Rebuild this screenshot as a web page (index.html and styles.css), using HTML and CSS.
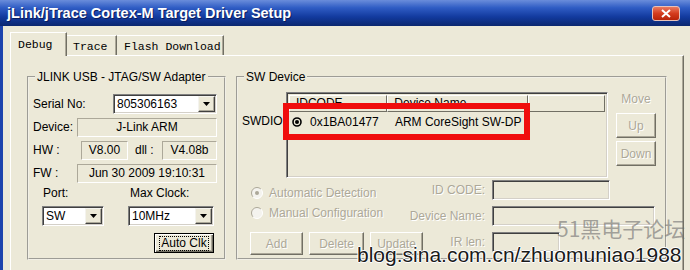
FILE: index.html
```html
<!DOCTYPE html>
<html lang="en">
<head>
    <meta charset="UTF-8">
    <meta name="viewport" content="width=device-width, initial-scale=1.0">
    <title>jLink/jTrace Cortex-M Target Driver Setup</title>
    <link rel="stylesheet" href="styles.css">
</head>
<body>
    <div class="window">
        <div class="titlebar">
            <span class="title">jLink/jTrace Cortex-M Target Driver Setup</span>
            <span class="close">
                <svg width="10" height="9" viewBox="0 0 10 9"><path d="M1 1L9 8M9 1L1 8" stroke="#fff" stroke-width="2" fill="none"/></svg>
            </span>
        </div>
        <div class="client">
            <div class="tabs">
                <div class="tab active">Debug</div>
                <div class="tab trace">Trace</div>
                <div class="tab flash">Flash Download</div>
            </div>
            <div class="panel">
                <fieldset class="group adapter">
                    <legend>JLINK USB - JTAG/SW Adapter</legend>
                    <div class="row">
                        <span class="lbl">Serial No:</span>
                        <div class="combo serial">
                            <span class="val">805306163</span>
                            <span class="drop"><svg width="7" height="4" viewBox="0 0 7 4"><path d="M0 0H7L3.5 4Z"/></svg></span>
                        </div>
                    </div>
                    <div class="row">
                        <span class="lbl">Device:</span>
                        <div class="static wide">J-Link ARM</div>
                    </div>
                    <div class="row">
                        <span class="lbl hw-lbl">HW :</span>
                        <div class="static hw">V8.00</div>
                        <span class="lbl dll-lbl">dll :</span>
                        <div class="static dll">V4.08b</div>
                    </div>
                    <div class="row">
                        <span class="lbl">FW :</span>
                        <div class="static wide">Jun 30 2009 19:10:31</div>
                    </div>
                    <div class="clocks">
                        <div class="field port">
                            <span class="lbl">Port:</span>
                            <div class="combo">
                                <span class="val">SW</span>
                                <span class="drop"><svg width="7" height="4" viewBox="0 0 7 4"><path d="M0 0H7L3.5 4Z"/></svg></span>
                            </div>
                        </div>
                        <div class="field clock">
                            <span class="lbl">Max Clock:</span>
                            <div class="combo">
                                <span class="val">10MHz</span>
                                <span class="drop"><svg width="7" height="4" viewBox="0 0 7 4"><path d="M0 0H7L3.5 4Z"/></svg></span>
                            </div>
                        </div>
                    </div>
                    <div class="btn autoclk"><span class="focus">Auto Clk</span></div>
                </fieldset>

                <fieldset class="group swdev">
                    <legend>SW Device</legend>
                    <div class="chain">
                        <span class="lbl swdio">SWDIO</span>
                        <div class="list">
                            <div class="list-head">
                                <span class="col c1">IDCODE</span>
                                <span class="col c2">Device Name</span>
                                <span class="col c3"></span>
                            </div>
                            <div class="list-row">
                                <span class="cell c1">
                                    <svg width="10" height="10" viewBox="0 0 10 10"><circle cx="5" cy="5" r="4" stroke="#000" stroke-width="1.6" fill="none"/><circle cx="5" cy="5" r="2" fill="#000"/></svg>
                                    0x1BA01477
                                </span>
                                <span class="cell c2">ARM CoreSight SW-DP</span>
                            </div>
                            <div class="mark"></div>
                        </div>
                        <div class="move">
                            <span class="lbl off">Move</span>
                            <div class="btn off up">Up</div>
                            <div class="btn off down">Down</div>
                        </div>
                    </div>
                    <div class="config">
                        <div class="modes">
                            <div class="radio">
                                <svg width="12" height="12" viewBox="0 0 12 12"><circle cx="6" cy="6" r="5.5" fill="#f4f3ee"/><path d="M2.1 9.9A5.5 5.5 0 0 1 9.9 2.1" stroke="#aca899" fill="none"/><path d="M9.9 2.1A5.5 5.5 0 0 1 2.1 9.9" stroke="#fff" fill="none"/><circle cx="6" cy="6" r="2" fill="#aca899"/></svg>
                                <span class="off">Automatic Detection</span>
                            </div>
                            <div class="radio">
                                <svg width="12" height="12" viewBox="0 0 12 12"><circle cx="6" cy="6" r="5.5" fill="#f4f3ee"/><path d="M2.1 9.9A5.5 5.5 0 0 1 9.9 2.1" stroke="#aca899" fill="none"/><path d="M9.9 2.1A5.5 5.5 0 0 1 2.1 9.9" stroke="#fff" fill="none"/></svg>
                                <span class="off">Manual Configuration</span>
                            </div>
                            <div class="actions">
                                <div class="btn off add">Add</div>
                                <div class="btn off del">Delete</div>
                                <div class="btn off upd">Update</div>
                            </div>
                        </div>
                        <div class="manual">
                            <span class="lbl off">ID CODE:</span>
                            <div class="edit idcode"></div>
                            <span class="lbl off">Device Name:</span>
                            <div class="edit devname"></div>
                            <span class="lbl off">IR len:</span>
                            <div class="edit irlen"></div>
                        </div>
                    </div>
                </fieldset>
            </div>
        </div>
        <div class="watermark cn">51黑电子论坛</div>
        <div class="watermark blog">blog.sina.com.cn/zhuomuniao1988</div>
    </div>
</body>
</html>
```

FILE: styles.css
```css
body {
    margin: 0;
    font-family: "Liberation Sans", Arial, sans-serif;
    font-size: 12px;
    color: #000;
    background-color: #ece9d8;
}
.window {
    position: relative;
    width: 690px;
    height: 270px;
    overflow: hidden;
    background-color: #ece9d8;
}
.titlebar {
    height: 26px;
    box-sizing: border-box;
    display: flex;
    justify-content: space-between;
    align-items: center;
    padding: 0 10px 0 7px;
    background: linear-gradient(#6a8ddb, #2f5cc4 30%, #123a9e 65%, #0b276f);
}
.title {
    color: #fff;
    font-weight: bold;
    font-size: 14.5px;
    text-shadow: 1px 1px #0a1d5c;
}
.close {
    width: 28px;
    height: 15px;
    box-sizing: border-box;
    display: flex;
    align-items: center;
    justify-content: center;
    border: 1px solid #e8c2b8;
    border-radius: 3px;
    background: linear-gradient(#ea7a60, #d43c1e 50%, #b82308);
}
.client {
    height: 244px;
    border-left: 3px solid #1d44ad;
    padding: 6px 0 0 7px;
}
.tabs {
    display: flex;
    align-items: flex-end;
    height: 23px;
    font-family: "Liberation Mono", monospace;
    font-size: 11.5px;
    line-height: 14px;
}
.tab {
    position: relative;
    height: 20px;
    box-sizing: border-box;
    padding: 4px 0 0 5px;
    border-top: 1px solid #fff;
    border-left: 1px solid #fff;
    border-right: 1px solid #716f64;
    box-shadow: inset -1px 0 #aca899;
    background-color: #ece9d8;
}
.tab.active {
    width: 57px;
    height: 24px;
    margin-bottom: -1px;
    padding: 5px 0 0 7px;
    z-index: 1;
}
.tab.trace {
    width: 50px;
    border-left: none;
    padding-left: 6px;
}
.tab.flash {
    width: 107px;
    border-left: none;
    padding-left: 7px;
}
.panel {
    width: 674px;
    height: 220px;
    box-sizing: border-box;
    display: flex;
    align-items: flex-start;
    gap: 10px;
    padding: 14px 0 0 16px;
    border-top: 1px solid #fff;
    border-left: 1px solid #fff;
    border-right: 1px solid #716f64;
    box-shadow: inset -1px 0 #aca899;
}
.group {
    margin: 0;
    height: 190px;
    box-sizing: border-box;
    border: 2px groove #f1efe6;
    min-inline-size: 0;
}
.group legend {
    margin-left: 2px;
    padding: 0 2px;
    line-height: 14px;
}
.adapter {
    width: 199px;
    padding: 10px 7px 0 4px;
}
.swdev {
    width: 431px;
    padding: 8px 9px 0 4px;
}
.lbl {
    line-height: 14px;
    white-space: nowrap;
}
.off {
    color: #aca899;
    text-shadow: 1px 1px #fff;
}
.row {
    display: flex;
    align-items: center;
    height: 20px;
    margin-bottom: 3px;
}
.combo {
    display: flex;
    align-items: center;
    justify-content: space-between;
    height: 20px;
    box-sizing: border-box;
    padding: 0 0 0 3px;
    border: 1px solid;
    border-color: #808080 #fff #fff #808080;
    box-shadow: inset 1px 1px #404040, inset -1px -1px #d4d0c8;
    background-color: #fff;
}
.combo.serial {
    width: 104px;
    margin-left: auto;
}
.drop {
    display: flex;
    align-items: center;
    justify-content: center;
    width: 17px;
    height: 16px;
    margin-right: 1px;
    box-sizing: border-box;
    border: 1px solid;
    border-color: #f4f3ee #404040 #404040 #f4f3ee;
    box-shadow: inset -1px -1px #aca899;
    background-color: #ece9d8;
}
.static {
    height: 19px;
    box-sizing: border-box;
    border: 1px solid;
    border-color: #aca899 #fff #fff #aca899;
    line-height: 17px;
    text-align: center;
}
.static.wide {
    width: 140px;
    margin-left: auto;
}
.hw-lbl {
    width: 48px;
}
.static.hw {
    width: 47px;
}
.dll-lbl {
    margin-left: 7px;
}
.static.dll {
    width: 55px;
    margin-left: auto;
}
.clocks {
    display: flex;
    margin-top: 3px;
}
.field {
    display: flex;
    flex-direction: column;
    gap: 6px;
}
.port {
    width: 62px;
    margin-left: 9px;
}
.port .lbl {
    padding-left: 1px;
}
.clock {
    width: 86px;
    margin-left: 24px;
}
.clock .lbl {
    padding-left: 2px;
}
.btn {
    display: flex;
    align-items: center;
    justify-content: center;
    flex-shrink: 0;
    box-sizing: border-box;
    border: 1px solid;
    border-color: #fff #716f64 #716f64 #fff;
    box-shadow: inset -1px -1px #aca899;
    background-color: #ece9d8;
}
.autoclk {
    width: 60px;
    height: 20px;
    margin: 7px 0 0 121px;
    border-color: #000;
    box-shadow: inset 1px 1px #fff, inset -1px -1px #716f64, inset -2px -2px #aca899;
}
.focus {
    padding: 0 1px;
    line-height: 13px;
    outline: 1px dotted #000;
}
.chain {
    display: flex;
    align-items: flex-start;
}
.swdio {
    width: 45px;
    margin-top: 22px;
}
.list {
    position: relative;
    width: 322px;
    height: 86px;
    box-sizing: border-box;
    border: 1px solid;
    border-color: #808080 #fff #fff #808080;
    box-shadow: inset 1px 1px #404040, inset -1px -1px #d4d0c8;
    padding: 2px 2px 0 2px;
}
.list-head {
    display: flex;
    height: 17px;
}
.col {
    height: 17px;
    box-sizing: border-box;
    padding-left: 6px;
    border: 1px solid;
    border-color: #fff #716f64 #716f64 #fff;
    line-height: 15px;
}
.c1 {
    width: 99px;
}
.c2 {
    width: 142px;
}
.col.c3 {
    width: 77px;
}
.list-row {
    display: flex;
    align-items: center;
    height: 20px;
}
.cell {
    display: flex;
    align-items: center;
    gap: 8px;
}
.cell.c1 {
    padding-left: 3px;
    box-sizing: border-box;
}
.cell.c2 {
    padding-left: 7px;
}
.mark {
    position: absolute;
    left: -4px;
    top: 10px;
    width: 247px;
    height: 37px;
    box-sizing: border-box;
    border: 6px solid #f00d0d;
}
.move {
    display: flex;
    flex-direction: column;
    width: 41px;
    margin-left: 8px;
    text-align: center;
}
.move .btn {
    height: 25px;
}
.up {
    margin-top: 7px;
}
.down {
    margin-top: 3px;
}
.config {
    display: flex;
}
.modes {
    width: 163px;
    padding-top: 8px;
}
.radio {
    display: flex;
    align-items: center;
    gap: 6px;
    height: 14px;
    padding-left: 9px;
    white-space: nowrap;
}
.radio + .radio {
    margin-top: 6px;
}
.actions {
    display: flex;
    gap: 6px;
    margin: 12px 0 0 8px;
}
.actions .btn {
    height: 23px;
}
.add {
    width: 53px;
}
.del {
    width: 55px;
}
.upd {
    width: 53px;
}
.manual {
    display: grid;
    grid-template-columns: 80px auto;
    grid-auto-rows: 20px;
    column-gap: 7px;
    row-gap: 6px;
    align-items: center;
    justify-items: start;
    padding-top: 2px;
}
.manual .lbl {
    justify-self: end;
}
.edit {
    height: 20px;
    box-sizing: border-box;
    border: 1px solid;
    border-color: #808080 #fff #fff #808080;
    box-shadow: inset 1px 1px #404040, inset -1px -1px #d4d0c8;
}
.idcode {
    width: 118px;
}
.devname {
    width: 163px;
}
.irlen {
    width: 68px;
}
.watermark {
    position: absolute;
    white-space: nowrap;
}
.cn {
    left: 557px;
    top: 218px;
    font-family: "Noto Sans CJK SC", sans-serif;
    font-size: 21px;
    line-height: 21px;
    color: rgba(110, 110, 110, 0.6);
}
.blog {
    left: 357px;
    top: 244px;
    font-size: 21px;
    line-height: 21px;
    color: #1a1a1a;
    text-shadow: 1px 0 #fff, -1px 0 #fff, 0 1px #fff, 0 -1px #fff;
}
```
